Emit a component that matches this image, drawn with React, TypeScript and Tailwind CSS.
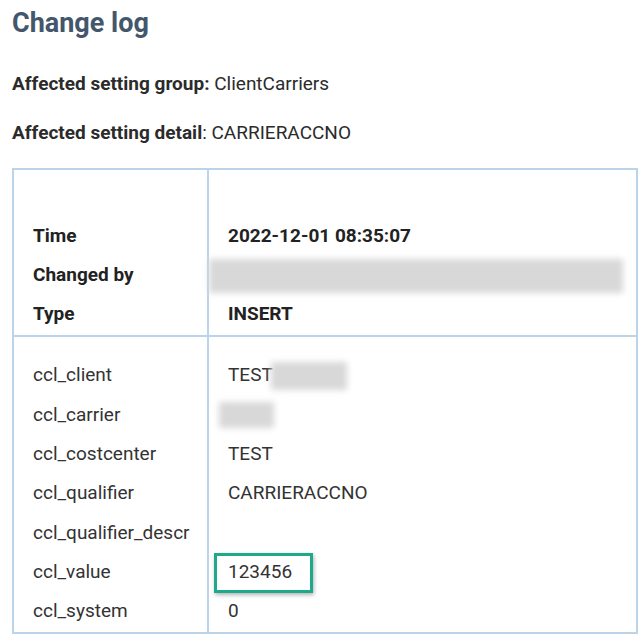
const headerRows: [string, string | null][] = [
  ["Time", "2022-12-01 08:35:07"],
  ["Changed by", null],
  ["Type", "INSERT"],
];

const bodyRows = [
  "ccl_client",
  "ccl_carrier",
  "ccl_costcenter",
  "ccl_qualifier",
  "ccl_qualifier_descr",
  "ccl_value",
  "ccl_system",
];

function Blur({ className }: { className: string }) {
  return <div className={"bg-[#d8d8d8] blur-[3px] " + className} />;
}

function BodyValue({ name }: { name: string }) {
  if (name === "ccl_client") {
    return (
      <div className="flex items-center">
        <span>TEST</span>
        <Blur className="w-[76px] h-[28px] -ml-[2px]" />
      </div>
    );
  }
  if (name === "ccl_carrier") {
    return <Blur className="w-[55px] h-[26px] -ml-[9px]" />;
  }
  if (name === "ccl_costcenter") return <span>TEST</span>;
  if (name === "ccl_qualifier") return <span>CARRIERACCNO</span>;
  if (name === "ccl_value") {
    return (
      <span className="relative">
        123456
        <span className="absolute -left-[14px] -right-[21px] -top-[5px] -bottom-[6px] border-[3px] border-[#1ea98a] shadow-[1px_2px_4px_rgba(0,0,0,0.3)]" />
      </span>
    );
  }
  if (name === "ccl_system") return <span>0</span>;
  return null;
}

export default function App() {
  return (
    <div className="w-[641px] h-[638px] bg-white font-['Roboto',sans-serif] text-[#2a2a2a] overflow-hidden">
      <h1 className="pl-3 pt-[3px] text-[27px] font-bold text-[#44566c] leading-[40px]">
        Change log
      </h1>
      <p className="pl-3 mt-[28px] text-[19px] leading-[26px] text-[#2b2b2b]">
        <span className="font-bold">Affected setting group:</span> ClientCarriers
      </p>
      <p className="pl-3 mt-[23px] text-[19px] leading-[26px] text-[#2b2b2b]">
        <span className="font-bold">Affected setting detail</span>: CARRIERACCNO
      </p>

      <div className="ml-3 mt-[22px] w-[626px] border-2 border-[#bcd4ea] text-[19px]">
        <div className="grid grid-cols-[195px_1fr] border-b-2 border-[#bcd4ea]">
          <div className="border-r-2 border-[#bcd4ea] pt-[47px] pb-[1px] pl-[19px]">
            {headerRows.map(([label]) => (
              <div key={label} className="h-[39px] flex items-center font-bold text-[#222]">
                {label}
              </div>
            ))}
          </div>
          <div className="pt-[47px] pb-[1px]">
            {headerRows.map(([label, value]) => (
              <div key={label} className="h-[39px] flex items-center pl-[19px] font-bold text-[#222]">
                {value === null ? <Blur className="-ml-[19px] w-[414px] h-[34px]" /> : value}
              </div>
            ))}
          </div>
        </div>
        <div className="grid grid-cols-[195px_1fr]">
          <div className="border-r-2 border-[#bcd4ea] pt-[19px] pb-[1px] pl-[19px]">
            {bodyRows.map((name) => (
              <div key={name} className="h-[39.33px] flex items-center text-[#333]">
                {name}
              </div>
            ))}
          </div>
          <div className="pt-[19px] pb-[1px] pl-[19px]">
            {bodyRows.map((name) => (
              <div key={name} className="h-[39.33px] flex items-center text-[#333]">
                <BodyValue name={name} />
              </div>
            ))}
          </div>
        </div>
      </div>
    </div>
  );
}
